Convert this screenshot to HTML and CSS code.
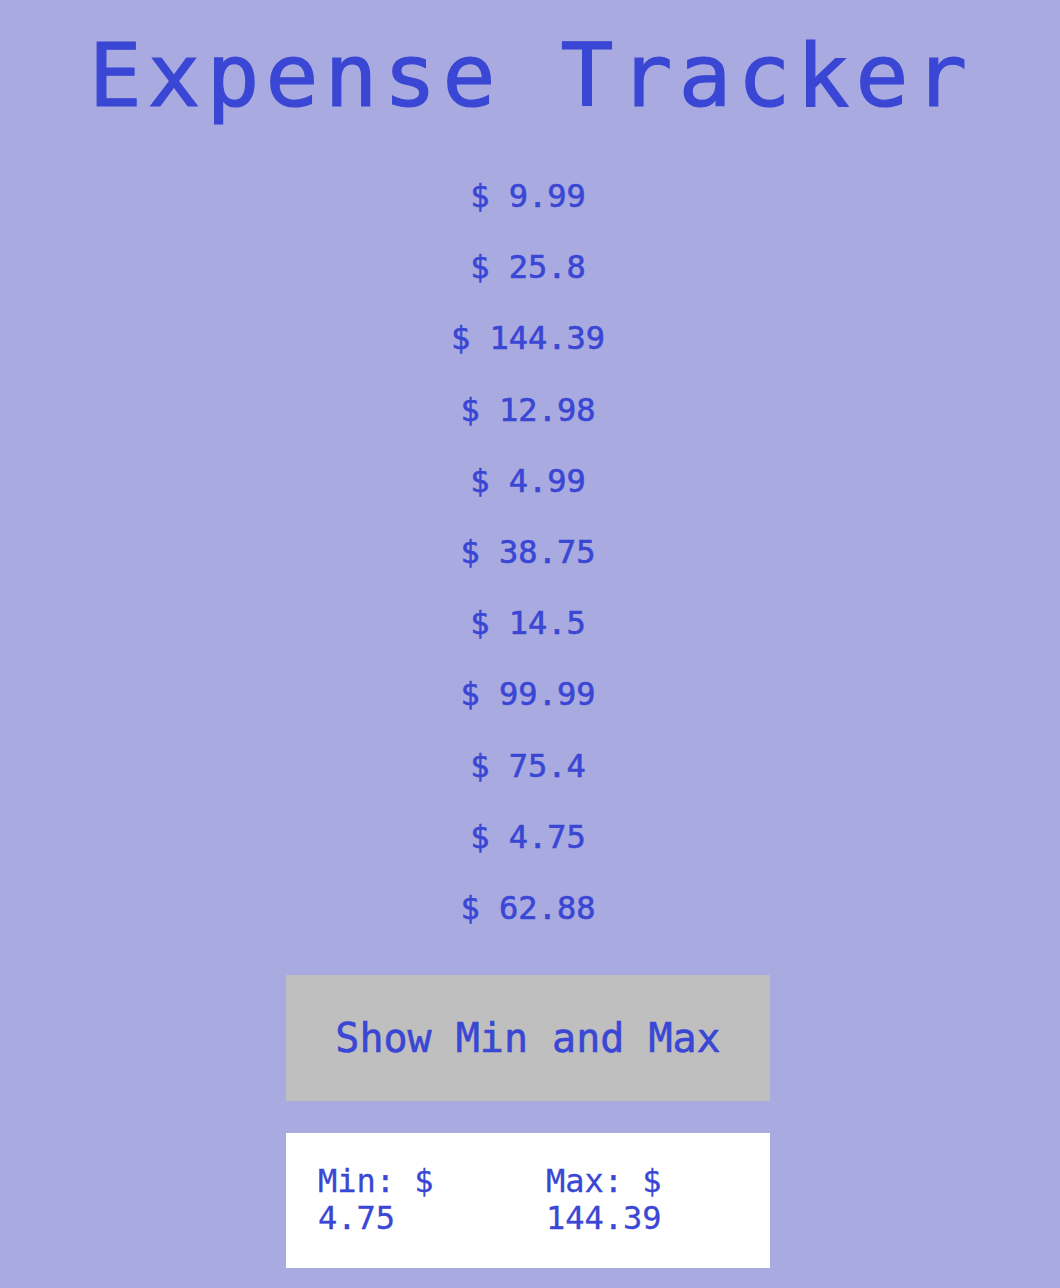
FILE: index.html
```html
<!DOCTYPE html>
<html lang="en">
<head>
<meta charset="utf-8">
<title>Expense Tracker</title>
<link rel="stylesheet" href="styles.css">
</head>
<body>
<main class="app">
  <h1 class="title">Expense Tracker</h1>
  <ul class="expenses">
    <li class="expense">$ 9.99</li>
    <li class="expense">$ 25.8</li>
    <li class="expense">$ 144.39</li>
    <li class="expense">$ 12.98</li>
    <li class="expense">$ 4.99</li>
    <li class="expense">$ 38.75</li>
    <li class="expense">$ 14.5</li>
    <li class="expense">$ 99.99</li>
    <li class="expense">$ 75.4</li>
    <li class="expense">$ 4.75</li>
    <li class="expense">$ 62.88</li>
  </ul>
  <button class="show-btn" type="button">Show Min and Max</button>
  <section class="result">
    <div class="result-item">Min: $ 4.75</div>
    <div class="result-item">Max: $ 144.39</div>
  </section>
</main>
</body>
</html>
```

FILE: styles.css
```css
html, body {
  margin: 0;
  padding: 0;
  background: #a9aadf;
}

body {
  font-family: "DejaVu Sans Mono", "Liberation Mono", monospace;
  color: #3a46d4;
}

.app {
  display: flex;
  flex-direction: column;
  align-items: center;
  padding-top: 22px;
  padding-right: 4px;
  padding-bottom: 20px;
}

.title {
  margin: 0;
  font-size: 88px;
  font-weight: 400;
  letter-spacing: 6px;
  text-indent: 6px;
  line-height: 107px;
  text-align: center;
  -webkit-text-stroke: 1.2px #3a46d4;
}

.expenses {
  list-style: none;
  margin: 49px 0 0;
  padding: 0;
  display: flex;
  flex-direction: column;
  align-items: center;
  gap: 34.2px;
}

.expense {
  font-size: 32px;
  line-height: 37px;
  font-weight: 400;
  -webkit-text-stroke: 0.6px #3a46d4;
}

.show-btn {
  margin-top: 48px;
  width: 484px;
  height: 126px;
  border: none;
  background: #bfbfbf;
  color: #3a46d4;
  font-family: "DejaVu Sans Mono", "Liberation Mono", monospace;
  font-size: 40px;
  padding: 0;
  cursor: pointer;
  -webkit-text-stroke: 0.6px #3a46d4;
}

.result {
  margin-top: 32px;
  width: 484px;
  box-sizing: border-box;
  background: #ffffff;
  padding: 30px 32px 31px;
  display: grid;
  grid-template-columns: 192px 192px;
  column-gap: 36px;
}

.result-item {
  font-size: 32px;
  line-height: 37px;
  -webkit-text-stroke: 0.3px #3a46d4;
}
```
